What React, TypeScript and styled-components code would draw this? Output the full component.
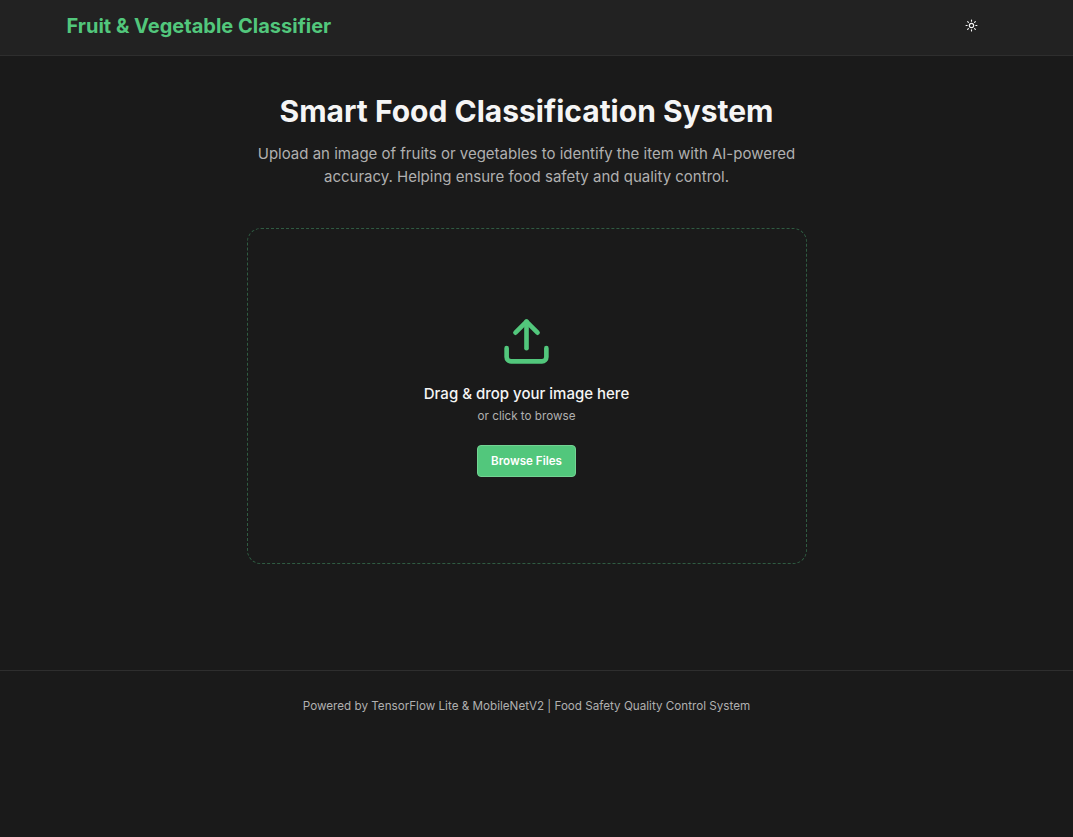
import React from 'react';
import styled, { createGlobalStyle } from 'styled-components';
import { Sun, Upload } from 'lucide-react';

const App = (): JSX.Element => {
  return (
    <Page>
      <GlobalStyle />
      <Header>
        <Brand>Fruit &amp; Vegetable Classifier</Brand>
        <ThemeButton type="button" aria-label="Toggle theme">
          <Sun size={13} strokeWidth={2.1} />
        </ThemeButton>
      </Header>
      <Main>
        <Title>Smart Food Classification System</Title>
        <Subtitle>
          Upload an image of fruits or vegetables to identify the item with AI-powered accuracy. Helping ensure
          food safety and quality control.
        </Subtitle>
        <DropZone>
          <Upload size={53} color="#52c77c" strokeWidth={2.1} />
          <DropTitle>Drag &amp; drop your image here</DropTitle>
          <DropHint>or click to browse</DropHint>
          <BrowseButton type="button">Browse Files</BrowseButton>
        </DropZone>
      </Main>
      <Footer>Powered by TensorFlow Lite &amp; MobileNetV2 | Food Safety Quality Control System</Footer>
    </Page>
  );
}

export default App;

const GlobalStyle = createGlobalStyle`
  * {
    box-sizing: border-box;
  }
  body {
    margin: 0;
    background: #1a1a1a;
    color: #f5f5f5;
    font-family: Inter, sans-serif;
  }
`;

const Page = styled.div`
  display: flex;
  flex-direction: column;
  min-height: 837px;
`;

const Header = styled.header`
  display: flex;
  align-items: center;
  justify-content: space-between;
  height: 56px;
  padding: 0 87px 4px 66.5px;
  background: #222222;
  border-bottom: 1px solid #2e2e2e;
`;

const Brand = styled.div`
  color: #52c77c;
  font-size: 20px;
  font-weight: 700;
  line-height: 28px;
`;

const ThemeButton = styled.button`
  display: flex;
  padding: 8px;
  color: #f5f5f5;
  background: none;
  border: none;
`;

const Main = styled.main`
  display: flex;
  flex-direction: column;
  align-items: center;
  height: 614px;
  padding: 35px 20px 0 0;
`;

const Title = styled.h1`
  margin: 0;
  font-size: 30px;
  font-weight: 700;
  line-height: 40px;
`;

const Subtitle = styled.p`
  width: 560px;
  margin: 11px 0 40px;
  color: #b0b0b0;
  font-size: 15px;
  line-height: 23px;
  text-align: center;
`;

const DropZone = styled.div`
  display: flex;
  flex-direction: column;
  align-items: center;
  width: 560px;
  height: 336px;
  padding-top: 86px;
  border: 1px dashed #2f5c42;
  border-radius: 14px;
`;

const DropTitle = styled.div`
  margin-top: 15px;
  font-size: 15px;
  font-weight: 500;
  line-height: 22px;
`;

const DropHint = styled.div`
  color: #b0b0b0;
  font-size: 11.66px;
  line-height: 22px;
`;

const BrowseButton = styled.button`
  width: 99px;
  height: 32px;
  margin-top: 18px;
  padding: 0 0 1px;
  color: #ffffff;
  background: #52c77c;
  border: 1px solid #73d393;
  border-radius: 4px;
  font-family: inherit;
  font-size: 11.6px;
  font-weight: 600;
`;

const Footer = styled.footer`
  padding: 26px 20px 0 0;
  color: #b0b0b0;
  border-top: 1px solid #2e2e2e;
  font-size: 11.66px;
  line-height: 18px;
  text-align: center;
`;
